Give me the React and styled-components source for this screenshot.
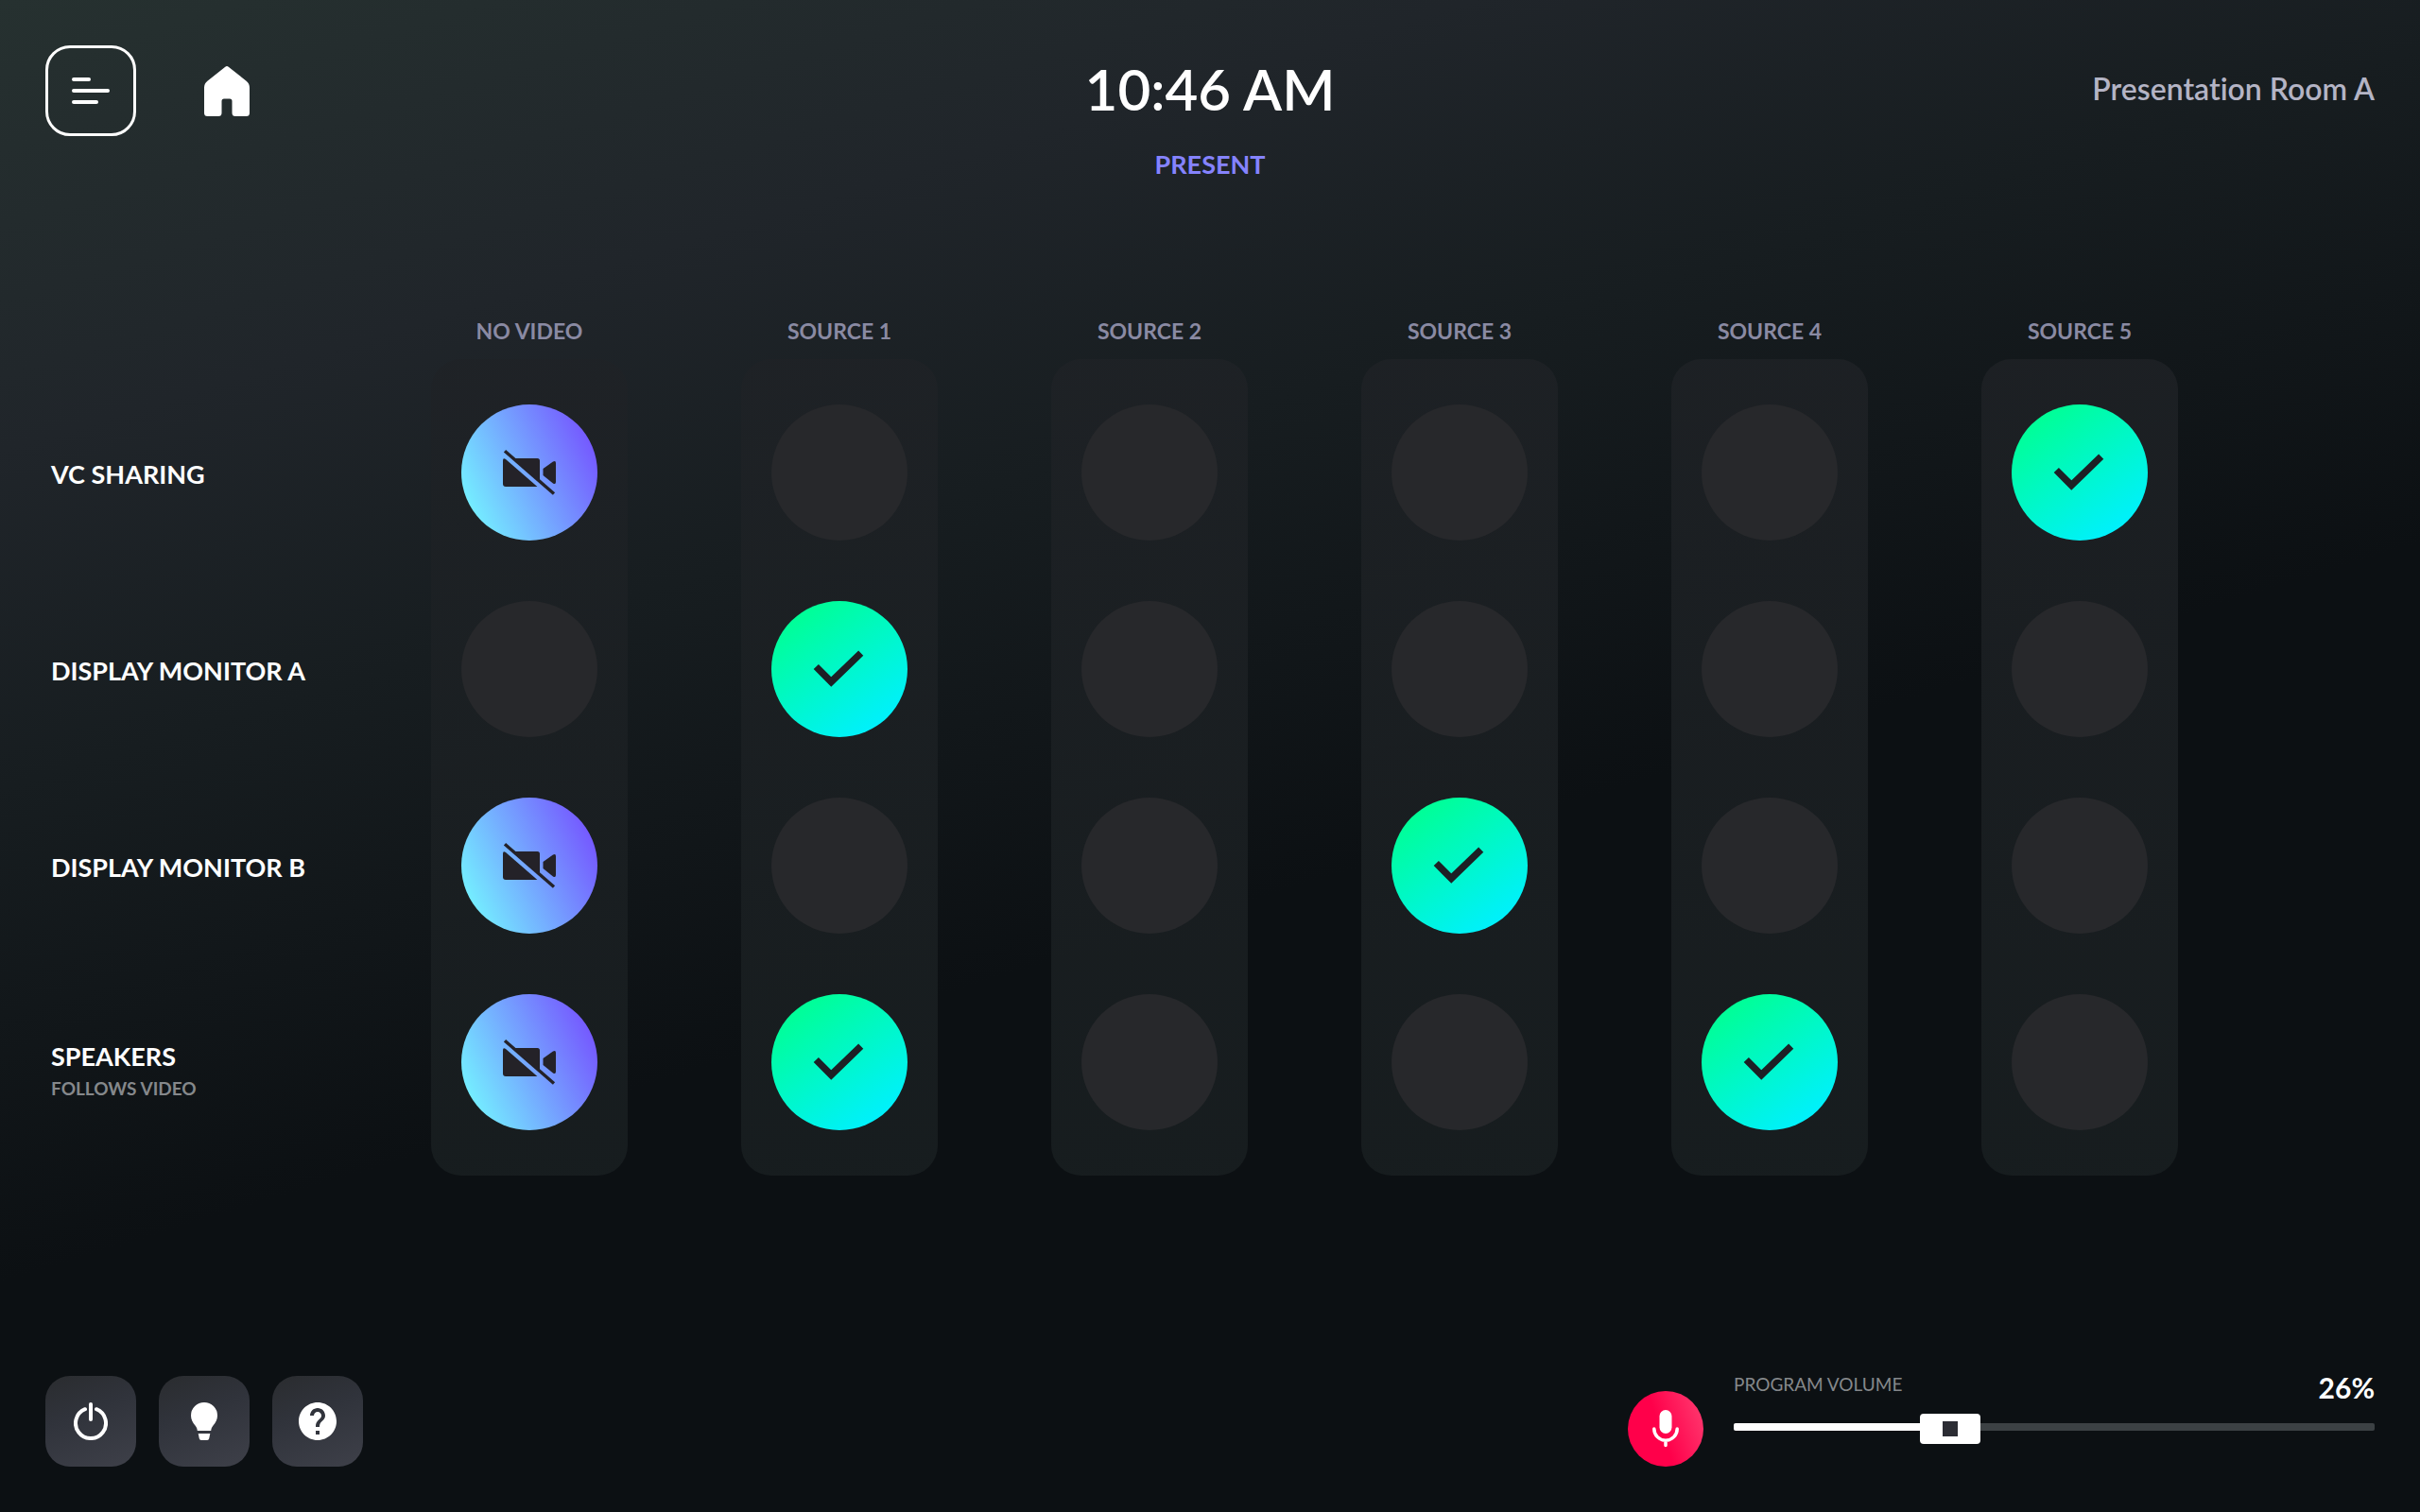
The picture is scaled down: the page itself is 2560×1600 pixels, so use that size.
import { useState } from 'react';
import styled, { createGlobalStyle, css } from 'styled-components';

const COLUMNS = ['NO VIDEO', 'SOURCE 1', 'SOURCE 2', 'SOURCE 3', 'SOURCE 4', 'SOURCE 5'];

const ROWS = [
    { name: 'VC SHARING' },
    { name: 'DISPLAY MONITOR A' },
    { name: 'DISPLAY MONITOR B' },
    { name: 'SPEAKERS', note: 'FOLLOWS VIDEO' },
];

// "column-row" keys of the routes that are switched on
const ROUTES = ['0-0', '0-2', '0-3', '1-1', '1-3', '3-2', '4-3', '5-0'];

// the fader travels a little below zero
const VOLUME_MIN = -9;
const VOLUME_MAX = 100;

function MenuIcon() {
    return (
        <svg width="40" height="28" viewBox="0 0 40 28" fill="#fff" aria-hidden="true">
            <rect width="20" height="4" rx="2" />
            <rect y="12" width="40" height="4" rx="2" />
            <rect y="24" width="28" height="4" rx="2" />
        </svg>
    );
}

function HomeIcon() {
    return (
        <svg width="48" height="53" viewBox="0 0 48 53" fill="#fff" aria-hidden="true">
            <path d="M22.3.7a2.7 2.7 0 0 1 3.4 0L44.6 15.8A9 9 0 0 1 48 22.8V49.5A3.5 3.5 0 0 1 44.5 53H33A3.5 3.5 0 0 1 29.5 49.5V37A2.5 2.5 0 0 0 27 34.5H21A2.5 2.5 0 0 0 18.5 37V49.5A3.5 3.5 0 0 1 15 53H3.5A3.5 3.5 0 0 1 0 49.5V22.8A9 9 0 0 1 3.4 15.8Z" />
        </svg>
    );
}

function CheckIcon() {
    return (
        <svg width="56" height="40" viewBox="0 0 56 40" fill="none" aria-hidden="true">
            <path d="M3.3 17.5L19.3 33.5L50.7 3.2" stroke="#1d2025" strokeWidth="7.4" />
        </svg>
    );
}

function NoVideoIcon() {
    return (
        <svg width="56" height="48" viewBox="0 0 56 48" fill="#242228" aria-hidden="true">
            <path d="M2 1.3L54 46.5" stroke="#242228" strokeWidth="3.4" />
            <path d="M10 9H36.5A2.5 2.5 0 0 1 39 11.5V34Z" />
            <path d="M0 11.5Q0 8 3 10L36.4 39H3A3 3 0 0 1 0 36Z" />
            <path d="M42.5 20L53 12.5Q56 11 56 14V34Q56 37 53 35.5L42.5 27Z" />
        </svg>
    );
}

function PowerIcon() {
    return (
        <svg width="36" height="40" viewBox="0 0 36 40" fill="none" stroke="#fff" strokeWidth="4" strokeLinecap="round" aria-hidden="true">
            <path d="M18 2V18" />
            <path d="M12 7.2A16 16 0 1 0 24 7.2" />
        </svg>
    );
}

function BulbIcon() {
    return (
        <svg width="28" height="40" viewBox="0 0 28 40" fill="#fff" aria-hidden="true">
            <path d="M14 0A14 14 0 0 1 28 14C28 18.5 26 21.5 23.5 24.5C21.8 26.5 21.5 28 21.2 30H6.8C6.5 28 6.2 26.5 4.5 24.5C2 21.5 0 18.5 0 14A14 14 0 0 1 14 0Z" />
            <path d="M7.7 33H20.3L19.2 38.2A2.2 2.2 0 0 1 17 40H11A2.2 2.2 0 0 1 8.8 38.2Z" />
        </svg>
    );
}

function HelpIcon() {
    return (
        <svg width="40" height="40" viewBox="2 2 20 20" fill="#fff" aria-hidden="true">
            <path d="M12 2C6.48 2 2 6.48 2 12s4.48 10 10 10 10-4.48 10-10S17.52 2 12 2zm1 17h-2v-2h2v2zm2.07-7.75l-.9.92C13.45 12.9 13 13.5 13 15h-2v-.5c0-1.1.45-2.1 1.17-2.83l1.24-1.26c.37-.36.59-.86.59-1.41 0-1.1-.9-2-2-2s-2 .9-2 2H8c0-2.21 1.79-4 4-4s4 1.79 4 4c0 .88-.36 1.68-.93 2.25z" />
        </svg>
    );
}

function MicIcon() {
    return (
        <svg width="28" height="40" viewBox="0 0 28 40" fill="none" stroke="#fff" strokeWidth="3.5" strokeLinecap="round" aria-hidden="true">
            <rect x="7.5" y="0" width="13" height="25" rx="6.5" fill="#fff" stroke="none" />
            <path d="M1.8 20A12.2 12.2 0 0 0 26.2 20M14 32.5V37.5" />
        </svg>
    );
}

function App() {
    const [routes, setRoutes] = useState(ROUTES);
    const [volume, setVolume] = useState(26);

    const toggleRoute = (key) => {
        setRoutes(routes.includes(key) ? routes.filter((route) => route !== key) : [...routes, key]);
    };

    const travel = ((volume - VOLUME_MIN) / (VOLUME_MAX - VOLUME_MIN)) * 100;

    return (
        <Page>
            <GlobalStyle />

            <Header>
                <HeaderNav>
                    <MenuButton type="button" aria-label="Menu"><MenuIcon /></MenuButton>
                    <HomeButton type="button" aria-label="Home"><HomeIcon /></HomeButton>
                </HeaderNav>
                <HeaderCenter>
                    <Clock>10:46 AM</Clock>
                    <Mode>PRESENT</Mode>
                </HeaderCenter>
                <Room>Presentation Room A</Room>
            </Header>

            <Matrix>
                <RowLabels>
                    {ROWS.map((row) => (
                        <RowLabel key={row.name} $hasNote={Boolean(row.note)}>
                            <RowName>{row.name}</RowName>
                            {row.note && <RowNote>{row.note}</RowNote>}
                        </RowLabel>
                    ))}
                </RowLabels>

                {COLUMNS.map((column, c) => (
                    <Column key={column}>
                        <ColumnName>{column}</ColumnName>
                        <ColumnPanel>
                            {ROWS.map((row, r) => {
                                const key = `${c}-${r}`;
                                const on = routes.includes(key);
                                return (
                                    <RouteButton
                                        key={key}
                                        type="button"
                                        $kind={!on ? 'off' : c === 0 ? 'mute' : 'source'}
                                        aria-pressed={on}
                                        aria-label={`${column}, ${row.name}`}
                                        onClick={() => toggleRoute(key)}
                                    >
                                        {on && (c === 0 ? <NoVideoIcon /> : <CheckIcon />)}
                                    </RouteButton>
                                );
                            })}
                        </ColumnPanel>
                    </Column>
                ))}
            </Matrix>

            <Footer>
                <FooterTools>
                    <ToolButton type="button" aria-label="Power"><PowerIcon /></ToolButton>
                    <ToolButton type="button" aria-label="Lights"><BulbIcon /></ToolButton>
                    <ToolButton type="button" aria-label="Help"><HelpIcon /></ToolButton>
                </FooterTools>

                <Volume>
                    <MicButton type="button" aria-label="Microphone"><MicIcon /></MicButton>
                    <VolumeControl>
                        <VolumeHead>
                            <VolumeLabel htmlFor="volume">PROGRAM VOLUME</VolumeLabel>
                            <VolumeValue htmlFor="volume">{Math.max(volume, 0)}%</VolumeValue>
                        </VolumeHead>
                        <VolumeSlider
                            id="volume"
                            type="range"
                            min={VOLUME_MIN}
                            max={VOLUME_MAX}
                            value={volume}
                            style={{ '--travel': `${travel}%` }}
                            onChange={(e) => setVolume(Number(e.target.value))}
                        />
                    </VolumeControl>
                </Volume>
            </Footer>
        </Page>
    );
}

export default App;

const GlobalStyle = createGlobalStyle`
    * {
        box-sizing: border-box;
    }

    body {
        margin: 0;
        background: #0c1013;
        color: #fff;
        font-family: Lato, "Open Sans", sans-serif;
    }

    button {
        display: flex;
        align-items: center;
        justify-content: center;
        flex-shrink: 0;
        padding: 0;
        border: none;
        background: none;
        cursor: pointer;
    }
`;

const Page = styled.div`
    display: flex;
    flex-direction: column;
    min-height: 100vh;
    background: linear-gradient(163deg, #263130 0%, #20252a 20%, #171d20 35%, #0c1013 57%);
`;

const Header = styled.header`
    display: grid;
    grid-template-columns: 1fr auto 1fr;
    padding: 48px 48px 0;
`;

const HeaderNav = styled.nav`
    display: flex;
    gap: 48px;
`;

const MenuButton = styled.button`
    width: 96px;
    height: 96px;
    border: 3px solid #fff;
    border-radius: 26px;
`;

const HomeButton = styled.button`
    width: 96px;
    height: 96px;
`;

const HeaderCenter = styled.div`
    text-align: center;
`;

const Clock = styled.div`
    font-size: 60px;
    font-weight: 600;
    line-height: 92px;
`;

const Mode = styled.div`
    margin-top: 18px;
    color: #8583ff;
    font-size: 27px;
    font-weight: 700;
    line-height: 32px;
`;

const Room = styled.div`
    color: #b4b4c5;
    font-size: 32px;
    font-weight: 600;
    font-variant-ligatures: none;
    line-height: 92px;
    text-align: right;
`;

const Matrix = styled.main`
    display: grid;
    grid-template-columns: 342px repeat(6, 1fr);
    padding: 144px 196px 64px 54px;
`;

const RowLabels = styled.div`
    display: flex;
    flex-direction: column;
    gap: 64px;
    padding-top: 94px;
`;

const RowLabel = styled.div`
    display: flex;
    flex-direction: column;
    justify-content: center;
    height: 144px;
    padding-top: ${({ $hasNote }) => ($hasNote ? '20px' : '4px')};
`;

const RowName = styled.div`
    font-size: 27px;
    font-weight: 700;
    line-height: 36px;
`;

const RowNote = styled.div`
    color: #85888b;
    font-size: 19px;
    font-weight: 700;
    line-height: 32px;
`;

const Column = styled.section`
    display: flex;
    flex-direction: column;
    align-items: center;
`;

const ColumnName = styled.h2`
    margin: 0 0 14px;
    color: #8a8aa3;
    font-size: 23px;
    font-weight: 700;
    line-height: 32px;
`;

const ColumnPanel = styled.div`
    display: flex;
    flex-direction: column;
    gap: 64px;
    padding: 48px 32px;
    border-radius: 32px;
    background: linear-gradient(rgba(31, 34, 38, 0.8), rgba(24, 30, 32, 0.9));
`;

const RouteButton = styled.button`
    width: 144px;
    height: 144px;
    border-radius: 50%;

    ${({ $kind }) => $kind === 'off' && css`
        background: #27282b;
    `}

    ${({ $kind }) => $kind === 'mute' && css`
        background: linear-gradient(65deg, #74f9ff 6%, #7552ff 92%);
    `}

    ${({ $kind }) => $kind === 'source' && css`
        background: linear-gradient(145deg, #00ff94 12%, #00f0ff 88%);
    `}
`;

const Footer = styled.footer`
    display: flex;
    align-items: flex-end;
    justify-content: space-between;
    margin-top: auto;
    padding: 0 48px 48px;
`;

const FooterTools = styled.div`
    display: flex;
    gap: 24px;
`;

const ToolButton = styled.button`
    width: 96px;
    height: 96px;
    border-radius: 26px;
    background: linear-gradient(160deg, #2a2c2f, #30333b 40%, #3e4049);
`;

const Volume = styled.div`
    display: flex;
    flex: 0 1 790px;
    align-items: flex-end;
    gap: 32px;
`;

const MicButton = styled.button`
    width: 80px;
    height: 80px;
    border-radius: 50%;
    background: linear-gradient(70deg, #ff004a 45%, #ff3f73);
`;

const VolumeControl = styled.div`
    flex: 1;
    padding-bottom: 38px;
`;

const VolumeHead = styled.div`
    display: flex;
    align-items: flex-start;
    justify-content: space-between;
`;

const VolumeLabel = styled.label`
    color: #85888b;
    font-size: 19px;
    line-height: 26px;
`;

const VolumeValue = styled.output`
    font-size: 30px;
    font-weight: 700;
    line-height: 32px;
`;

const VolumeSlider = styled.input`
    display: block;
    width: 100%;
    height: 8px;
    margin: 22px 0 0;
    border-radius: 2px;
    background: linear-gradient(90deg, #fff var(--travel), #3c4144 var(--travel));
    appearance: none;
    cursor: pointer;

    &::-webkit-slider-runnable-track {
        height: 8px;
    }

    &::-webkit-slider-thumb {
        width: 64px;
        height: 32px;
        margin-top: -10px;
        border-radius: 4px;
        background: linear-gradient(#2b2c33, #2b2c33) center / 16px 16px no-repeat #fff;
        appearance: none;
    }
`;
